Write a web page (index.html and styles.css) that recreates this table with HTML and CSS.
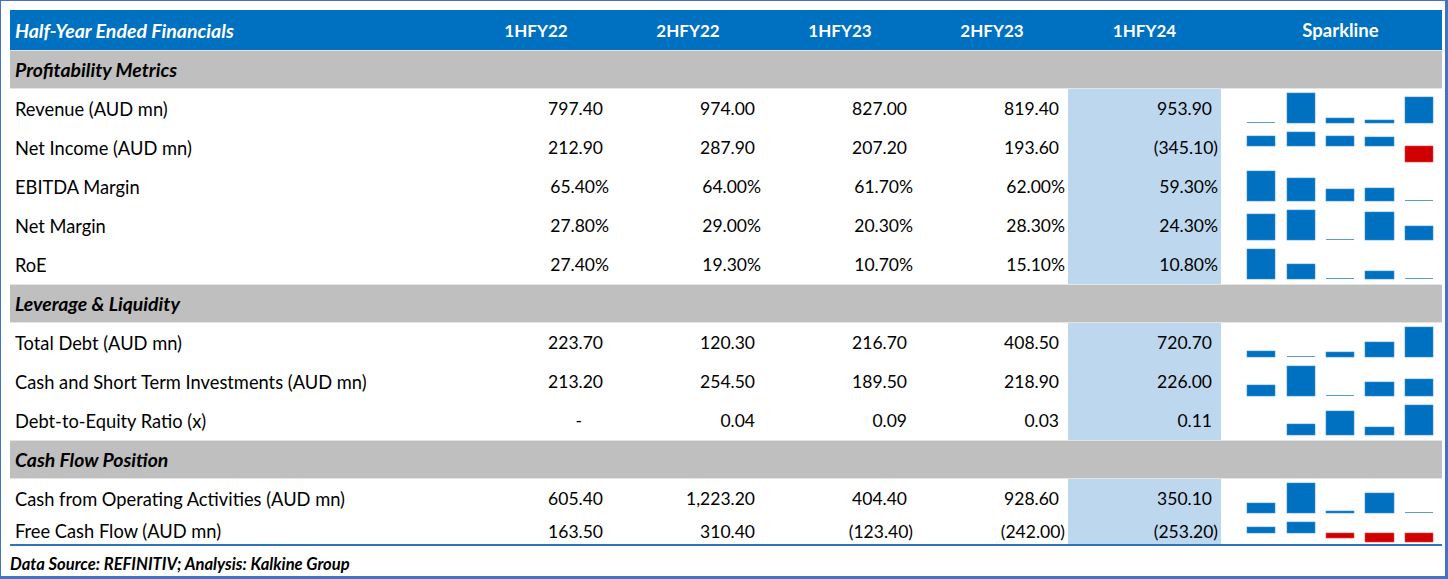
FILE: index.html
```html
<!DOCTYPE html>
<html>
<head>
<meta charset="utf-8">
<link rel="stylesheet" href="styles.css">
</head>
<body>
<div class="frame">
  <div class="table">
    <div class="row head">
      <div class="c label">Half-Year Ended Financials</div>
      <div class="c h">1HFY22</div>
      <div class="c h">2HFY22</div>
      <div class="c h">1HFY23</div>
      <div class="c h">2HFY23</div>
      <div class="c h">1HFY24</div>
      <div class="c h sp">Sparkline</div>
    </div>

    <div class="row section"><div class="c label">Profitability Metrics</div></div>

    <div class="row data">
      <div class="c label">Revenue (AUD mn)</div>
      <div class="c num pos">797.40</div>
      <div class="c num pos">974.00</div>
      <div class="c num pos">827.00</div>
      <div class="c num pos">819.40</div>
      <div class="c num pos hl">953.90</div>
      <div class="c spark"><svg width="221" height="39" viewBox="0 0 221 39">
        <rect class="thin" x="26" y="33" width="28" height="1"/>
        <rect class="b" x="66" y="4" width="28" height="30"/>
        <rect class="b" x="105" y="29" width="28" height="5"/>
        <rect class="b" x="144" y="31" width="29" height="3"/>
        <rect class="b" x="184" y="8" width="28" height="26"/>
      </svg></div>
    </div>

    <div class="row data">
      <div class="c label">Net Income (AUD mn)</div>
      <div class="c num pos">212.90</div>
      <div class="c num pos">287.90</div>
      <div class="c num pos">207.20</div>
      <div class="c num pos">193.60</div>
      <div class="c num hl">(345.10)</div>
      <div class="c spark"><svg width="221" height="39" viewBox="0 0 221 39">
        <rect class="b" x="26" y="8" width="28" height="10"/>
        <rect class="b" x="66" y="4" width="28" height="14"/>
        <rect class="b" x="105" y="8" width="28" height="10"/>
        <rect class="b" x="144" y="9" width="29" height="9"/>
        <rect class="r" x="184" y="18" width="28" height="16"/>
      </svg></div>
    </div>

    <div class="row data">
      <div class="c label">EBITDA Margin</div>
      <div class="c num">65.40%</div>
      <div class="c num">64.00%</div>
      <div class="c num">61.70%</div>
      <div class="c num">62.00%</div>
      <div class="c num hl">59.30%</div>
      <div class="c spark"><svg width="221" height="39" viewBox="0 0 221 39">
        <rect class="b" x="26" y="4" width="28" height="30"/>
        <rect class="b" x="66" y="11" width="28" height="23"/>
        <rect class="b" x="105" y="22" width="28" height="12"/>
        <rect class="b" x="144" y="21" width="29" height="13"/>
        <rect class="thin" x="184" y="33" width="28" height="1"/>
      </svg></div>
    </div>

    <div class="row data">
      <div class="c label">Net Margin</div>
      <div class="c num">27.80%</div>
      <div class="c num">29.00%</div>
      <div class="c num">20.30%</div>
      <div class="c num">28.30%</div>
      <div class="c num hl">24.30%</div>
      <div class="c spark"><svg width="221" height="39" viewBox="0 0 221 39">
        <rect class="b" x="26" y="8" width="28" height="26"/>
        <rect class="b" x="66" y="4" width="28" height="30"/>
        <rect class="thin" x="105" y="33" width="28" height="1"/>
        <rect class="b" x="144" y="6" width="29" height="28"/>
        <rect class="b" x="184" y="20" width="28" height="14"/>
      </svg></div>
    </div>

    <div class="row data">
      <div class="c label">RoE</div>
      <div class="c num">27.40%</div>
      <div class="c num">19.30%</div>
      <div class="c num">10.70%</div>
      <div class="c num">15.10%</div>
      <div class="c num hl">10.80%</div>
      <div class="c spark"><svg width="221" height="39" viewBox="0 0 221 39">
        <rect class="b" x="26" y="4" width="28" height="30"/>
        <rect class="b" x="66" y="19" width="28" height="15"/>
        <rect class="thin" x="105" y="33" width="28" height="1"/>
        <rect class="b" x="144" y="26" width="29" height="8"/>
        <rect class="thin" x="184" y="33" width="28" height="1"/>
      </svg></div>
    </div>

    <div class="row section"><div class="c label">Leverage &amp; Liquidity</div></div>

    <div class="row data">
      <div class="c label">Total Debt (AUD mn)</div>
      <div class="c num pos">223.70</div>
      <div class="c num pos">120.30</div>
      <div class="c num pos">216.70</div>
      <div class="c num pos">408.50</div>
      <div class="c num pos hl">720.70</div>
      <div class="c spark"><svg width="221" height="39" viewBox="0 0 221 39">
        <rect class="b" x="26" y="28" width="28" height="6"/>
        <rect class="thin" x="66" y="33" width="28" height="1"/>
        <rect class="b" x="105" y="29" width="28" height="5"/>
        <rect class="b" x="144" y="19" width="29" height="15"/>
        <rect class="b" x="184" y="4" width="28" height="30"/>
      </svg></div>
    </div>

    <div class="row data">
      <div class="c label">Cash and Short Term Investments (AUD mn)</div>
      <div class="c num pos">213.20</div>
      <div class="c num pos">254.50</div>
      <div class="c num pos">189.50</div>
      <div class="c num pos">218.90</div>
      <div class="c num pos hl">226.00</div>
      <div class="c spark"><svg width="221" height="39" viewBox="0 0 221 39">
        <rect class="b" x="26" y="23" width="28" height="11"/>
        <rect class="b" x="66" y="4" width="28" height="30"/>
        <rect class="thin" x="105" y="33" width="28" height="1"/>
        <rect class="b" x="144" y="20" width="29" height="14"/>
        <rect class="b" x="184" y="17" width="28" height="17"/>
      </svg></div>
    </div>

    <div class="row data">
      <div class="c label">Debt-to-Equity Ratio (x)</div>
      <div class="c num dash">-</div>
      <div class="c num pos">0.04</div>
      <div class="c num pos">0.09</div>
      <div class="c num pos">0.03</div>
      <div class="c num pos hl">0.11</div>
      <div class="c spark"><svg width="221" height="39" viewBox="0 0 221 39">
        <rect class="b" x="66" y="23" width="28" height="11"/>
        <rect class="b" x="105" y="10" width="28" height="24"/>
        <rect class="b" x="144" y="26" width="29" height="8"/>
        <rect class="b" x="184" y="4" width="28" height="30"/>
      </svg></div>
    </div>

    <div class="row section"><div class="c label">Cash Flow Position</div></div>

    <div class="row data">
      <div class="c label">Cash from Operating Activities (AUD mn)</div>
      <div class="c num pos">605.40</div>
      <div class="c num pos">1,223.20</div>
      <div class="c num pos">404.40</div>
      <div class="c num pos">928.60</div>
      <div class="c num pos hl">350.10</div>
      <div class="c spark"><svg width="221" height="39" viewBox="0 0 221 39">
        <rect class="b" x="26" y="24" width="28" height="10"/>
        <rect class="b" x="66" y="4" width="28" height="30"/>
        <rect class="b" x="105" y="32" width="28" height="2"/>
        <rect class="b" x="144" y="14" width="29" height="20"/>
        <rect class="thin" x="184" y="33" width="28" height="1"/>
      </svg></div>
    </div>

    <div class="row data last">
      <div class="c label">Free Cash Flow (AUD mn)</div>
      <div class="c num pos">163.50</div>
      <div class="c num pos">310.40</div>
      <div class="c num">(123.40)</div>
      <div class="c num">(242.00)</div>
      <div class="c num hl">(253.20)</div>
      <div class="c spark"><svg width="221" height="26" viewBox="0 0 221 26">
        <rect class="b" x="26" y="9" width="28" height="6"/>
        <rect class="b" x="66" y="4" width="28" height="11"/>
        <rect class="r" x="105" y="15" width="28" height="5"/>
        <rect class="r" x="144" y="15" width="29" height="9"/>
        <rect class="r" x="184" y="15" width="28" height="9"/>
      </svg></div>
    </div>
  </div>
  <div class="source">Data Source: REFINITIV; Analysis: Kalkine Group</div>
</div>
</body>
</html>
```

FILE: styles.css
```css
html, body {
  margin: 0;
  padding: 0;
  background: #ffffff;
}

.frame {
  box-sizing: border-box;
  width: 1448px;
  height: 579px;
  border-top: 1px solid #4472c4;
  border-left: 1px solid #4472c4;
  border-right: 3px solid #4472c4;
  border-bottom: 3px solid #4472c4;
  padding: 9px 0 0 9px;
  font-family: Lato, "Liberation Sans", sans-serif;
  color: #000;
}

.table {
  width: 1432px;
  display: flex;
  flex-direction: column;
}

.row {
  display: grid;
  grid-template-columns: 450px 152px 152px 152px 152px 153px 221px;
  height: 39px;
}

.c {
  display: flex;
  align-items: center;
  box-sizing: border-box;
  white-space: nowrap;
}

.head {
  height: 40px;
  background: #0070c0;
  color: #ffffff;
  font-weight: 700;
  font-size: 17px;
}

.head .label {
  font-style: italic;
  font-size: 19.5px;
  padding-left: 5px;
}

.head .h {
  justify-content: center;
}

.head .sp {
  font-size: 18.5px;
  padding-left: 18px;
}

.section {
  background: #bfbfbf;
  border-top: 1px solid #e4e4e4;
  border-bottom: 1px solid #e4e4e4;
  box-sizing: border-box;
  font-weight: 700;
  font-style: italic;
  font-size: 19.4px;
}

.section .label {
  grid-column: 1 / -1;
  padding-left: 5px;
}

.data {
  font-size: 17.5px;
}

.data .label {
  padding-left: 5px;
  font-size: 18.3px;
}

.num {
  justify-content: flex-end;
  padding-right: 3px;
}

.num.pos {
  padding-right: 9px;
}

.num.dash {
  padding-right: 30px;
}

.hl {
  background: #bdd7ee;
}

.spark {
  align-items: flex-start;
}

.spark svg {
  display: block;
}

.b {
  fill: #0070c0;
  stroke: #3a8fd0;
  stroke-width: 0.6;
}

.r {
  fill: #d00000;
  stroke: #e04848;
  stroke-width: 0.6;
}

.thin {
  fill: #5b9bd5;
}

.last {
  height: 28px;
  border-bottom: 2px solid #2e75b6;
  box-sizing: border-box;
}

.source {
  padding-top: 8px;
  font-size: 16.6px;
  font-weight: 700;
  font-style: italic;
}
```
